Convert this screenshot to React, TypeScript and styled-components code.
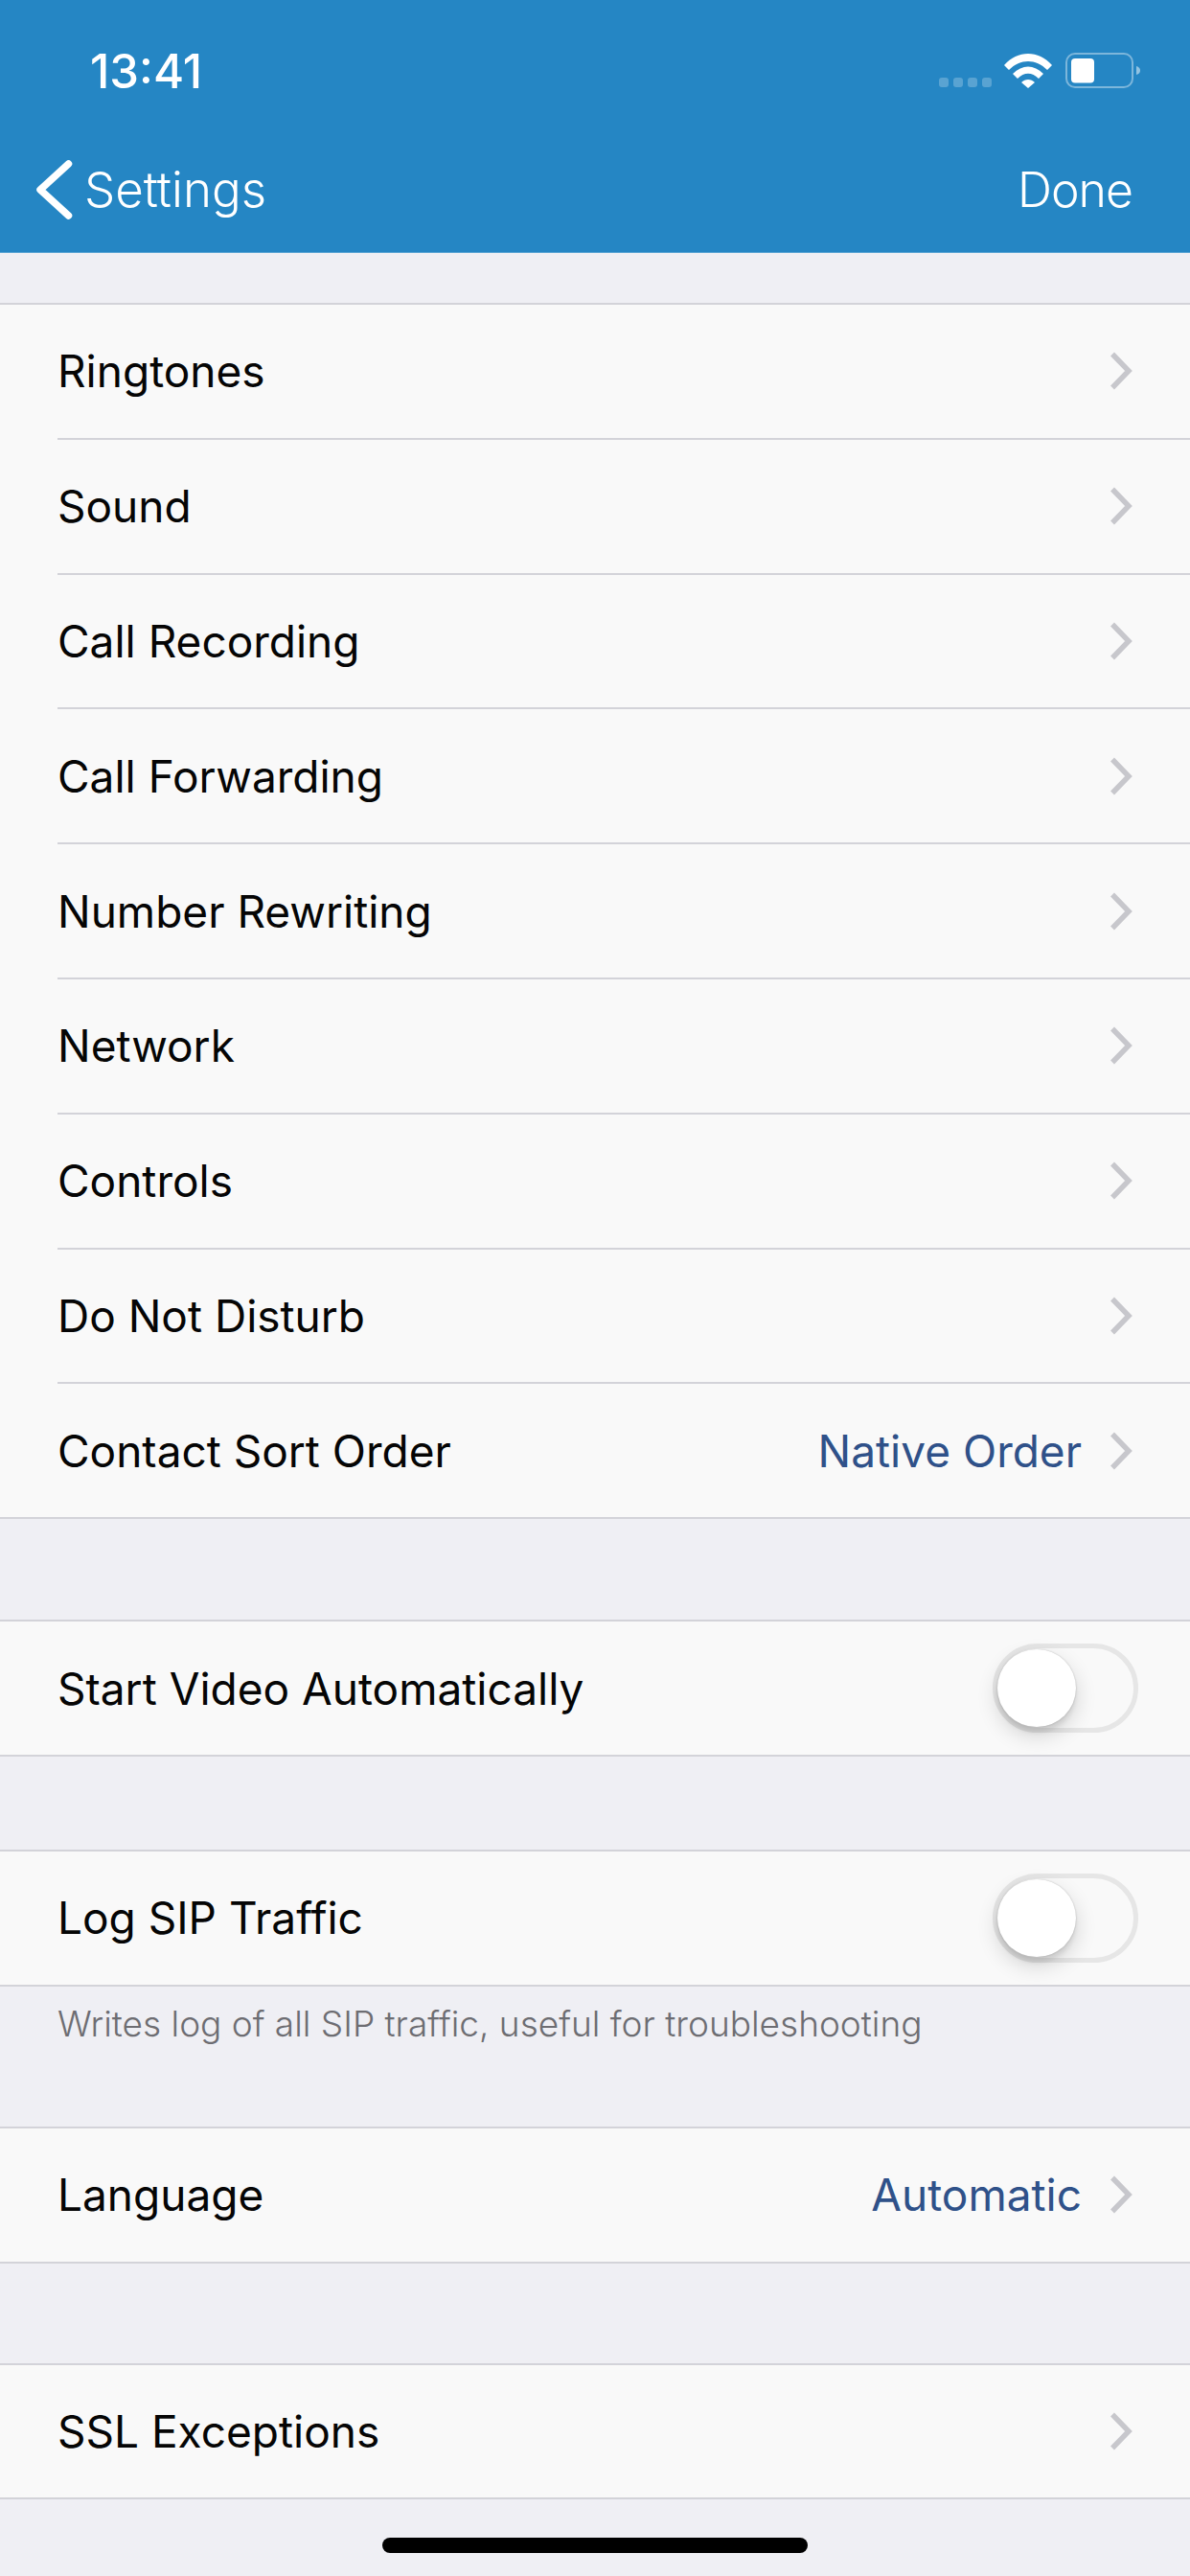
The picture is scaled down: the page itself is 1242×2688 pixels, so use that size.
import styled, { createGlobalStyle } from "styled-components";

const GlobalStyle = createGlobalStyle`
    html, body {
        margin: 0;
        padding: 0;
        background: #efeff4;
    }
    body {
        font-family: "Inter", "Liberation Sans", sans-serif;
    }
`;

const Screen = styled.div`
    position: relative;
    width: 1242px;
    height: 2688px;
    overflow: hidden;
    background: #efeff4;
    display: flex;
    flex-direction: column;
`;

const Header = styled.header`
    height: 264px;
    flex: none;
    background: #2586c4;
    border-bottom: 1px solid #5aa4d3;
    color: #fff;
    box-sizing: border-box;
`;

const StatusBar = styled.div`
    height: 165px;
    display: flex;
    align-items: flex-start;
    justify-content: space-between;
    padding: 0 52px 0 94px;
`;

const Clock = styled.span`
    font-size: 49px;
    font-weight: 500;
    line-height: 56px;
    margin-top: 47px;
`;

const StatusIcons = styled.div`
    display: flex;
    align-items: flex-start;
    margin-top: 55px;
`;

const SignalDots = styled.div`
    display: flex;
    gap: 4.5px;
    margin-top: 26px;
    margin-right: 13px;
`;

const SignalDot = styled.span`
    width: 10.5px;
    height: 10px;
    border-radius: 3px;
    background: rgba(255, 255, 255, 0.24);
`;

const WifiIcon = styled.svg`
    width: 50px;
    height: 37px;
    margin-right: 14px;
`;

const BatteryIcon = styled.svg`
    width: 78px;
    height: 37px;
`;

const NavBar = styled.nav`
    display: flex;
    align-items: center;
    justify-content: space-between;
    height: 66px;
    padding: 0 60px 0 38px;
`;

const BackButton = styled.div`
    display: flex;
    align-items: center;
    gap: 12px;
`;

const NavLabel = styled.span`
    font-size: 51px;
    font-weight: 300;
    line-height: 64px;
`;

const DoneLabel = styled(NavLabel)`
    font-size: 50px;
    letter-spacing: -1px;
`;

const List = styled.main`
    display: flex;
    flex-direction: column;
`;

const Group = styled.section<{ $top: number }>`
    margin-top: ${(p) => p.$top}px;
    background: #f9f9f9;
    border-top: 2px solid #d3d3d9;
    border-bottom: 2px solid #d3d3d9;
`;

const Row = styled.div`
    position: relative;
    height: 138.8px;
    display: flex;
    align-items: center;
    padding: 0 60px;
    & + & {
        border-top: 2px solid transparent;
    }
    & + &::before {
        content: "";
        position: absolute;
        left: 60px;
        right: 0;
        top: -2px;
        height: 2px;
        background: #d3d3d9;
    }
`;

const RowLabel = styled.span`
    flex: 1;
    font-size: 46px;
    font-weight: 400;
    color: #050505;
`;

const RowValue = styled.span`
    font-size: 46px;
    font-weight: 400;
    color: #2f5189;
    margin-right: 29px;
`;

const Chevron = styled.svg`
    width: 24px;
    height: 40px;
    flex: none;
`;

const Toggle = styled.div`
    position: relative;
    width: 152px;
    height: 93px;
    margin-right: -6px;
    border-radius: 47px;
    border: 5px solid #e6e6e6;
    box-sizing: border-box;
`;

const Knob = styled.div`
    position: absolute;
    left: 0;
    top: 1px;
    width: 82px;
    height: 81px;
    border-radius: 50%;
    background: #fff;
    box-shadow: 0 9px 22px rgba(0, 0, 0, 0.16), 0 6px 4px rgba(0, 0, 0, 0.07), 0 0 2px rgba(0, 0, 0, 0.22);
`;

const FooterNote = styled.p`
    margin: 19px 60px 0;
    height: 50px;
    font-size: 37px;
    line-height: 40px;
    font-weight: 300;
    color: #6d6d72;
`;

const HomeBar = styled.div`
    position: absolute;
    left: 399px;
    bottom: 24px;
    width: 444px;
    height: 16px;
    border-radius: 8px;
    background: #000;
`;

const SETTINGS_TOP: { label: string; value?: string }[] = [
    { label: "Ringtones" },
    { label: "Sound" },
    { label: "Call Recording" },
    { label: "Call Forwarding" },
    { label: "Number Rewriting" },
    { label: "Network" },
    { label: "Controls" },
    { label: "Do Not Disturb" },
    { label: "Contact Sort Order", value: "Native Order" },
];

function Disclosure() {
    return (
        <Chevron viewBox="0 0 24 40" fill="none">
            <path d="M3 2.5 L20 20 L3 37.5" stroke="#c7c7cc" strokeWidth="5.5" />
        </Chevron>
    );
}

function LinkRow({ label, value }: { label: string; value?: string }) {
    return (
        <Row>
            <RowLabel>{label}</RowLabel>
            {value && <RowValue>{value}</RowValue>}
            <Disclosure />
        </Row>
    );
}

function SwitchRow({ label }: { label: string }) {
    return (
        <Row>
            <RowLabel>{label}</RowLabel>
            <Toggle>
                <Knob />
            </Toggle>
        </Row>
    );
}

export default function App() {
    return (
        <Screen>
            <GlobalStyle />
            <Header>
                <StatusBar>
                    <Clock>13:41</Clock>
                    <StatusIcons>
                        <SignalDots>
                            <SignalDot />
                            <SignalDot />
                            <SignalDot />
                            <SignalDot />
                        </SignalDots>
                        <WifiIcon viewBox="0 0 50 37">
                            <path d="M0 13 C14 -3 36 -3 50 13 L45 18 C33 6 17 6 5 18 Z" fill="#fff" />
                            <path d="M9 22 C19 12 31 12 41 22 L36 27 C29 20 21 20 14 27 Z" fill="#fff" />
                            <path d="M18 31 C22 27 28 27 32 31 L25 37 Z" fill="#fff" />
                        </WifiIcon>
                        <BatteryIcon viewBox="0 0 78 37">
                            <rect x="1" y="1" width="69" height="35" rx="9" fill="none" stroke="#fff" strokeOpacity="0.4" strokeWidth="2" />
                            <rect x="6" y="6" width="24" height="25.5" rx="4" fill="#fff" />
                            <path d="M74 14 C77 15 78 16.500 78 18.500 C78 20.500 77 22 74 23 Z" fill="#fff" fillOpacity="0.5" />
                        </BatteryIcon>
                    </StatusIcons>
                </StatusBar>
                <NavBar>
                    <BackButton>
                        <svg width="38" height="64" viewBox="0 0 38 64" fill="none">
                            <path d="M33.500 5 L4 32 L33.500 59" stroke="#fff" strokeWidth="7.500" strokeLinecap="round" strokeLinejoin="round" />
                        </svg>
                        <NavLabel>Settings</NavLabel>
                    </BackButton>
                    <DoneLabel>Done</DoneLabel>
                </NavBar>
            </Header>
            <List>
                <Group $top={52}>
                    {SETTINGS_TOP.map((s) => (
                        <LinkRow key={s.label} label={s.label} value={s.value} />
                    ))}
                </Group>
                <Group $top={105}>
                    <SwitchRow label="Start Video Automatically" />
                </Group>
                <Group $top={97}>
                    <SwitchRow label="Log SIP Traffic" />
                </Group>
                <FooterNote>Writes log of all SIP traffic, useful for troubleshooting</FooterNote>
                <Group $top={77}>
                    <LinkRow label="Language" value="Automatic" />
                </Group>
                <Group $top={104}>
                    <LinkRow label="SSL Exceptions" />
                </Group>
            </List>
            <HomeBar />
        </Screen>
    );
}
